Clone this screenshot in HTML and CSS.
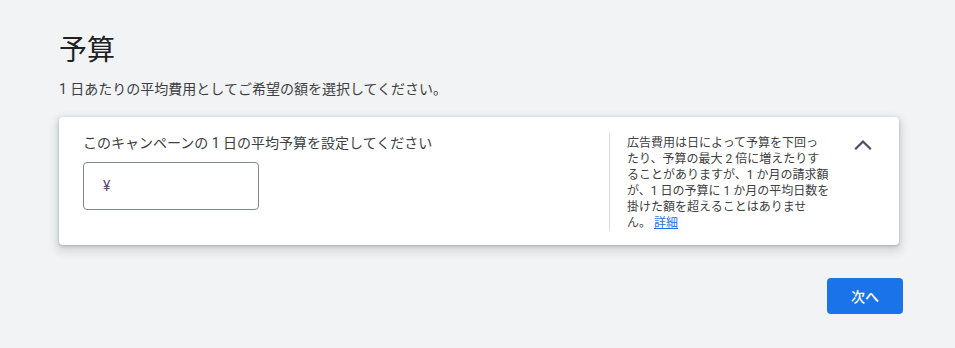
FILE: index.html
```html
<!DOCTYPE html>
<html lang="ja">
<head>
    <meta charset="UTF-8">
    <title>予算</title>
    <link rel="stylesheet" href="styles.css">
</head>
<body>
    <div class="page">
        <h1 class="title">予算</h1>
        <p class="subtitle">1 日あたりの平均費用としてご希望の額を選択してください。</p>

        <div class="card">
            <div class="card-main">
                <label class="field-label" for="budget">このキャンペーンの 1 日の平均予算を設定してください</label>
                <div class="money-input">
                    <span class="currency">¥</span>
                    <input id="budget" type="text" class="money-control">
                </div>
            </div>
            <div class="card-help">
                <span>広告費用は日によって予算を下回ったり、予算の最大 2 倍に増えたりすることがありますが、1 か月の請求額が、1 日の予算に 1 か月の平均日数を掛けた額を超えることはありません。</span>
                <a href="#" class="link">詳細</a>
            </div>
            <button class="collapse-btn" type="button" aria-label="閉じる">
                <svg width="18" height="12" viewBox="0 0 18 12">
                    <path d="M1.2 10.3 L9 2.5 L16.8 10.3" fill="none" stroke="#4a4d6a" stroke-width="2.2"/>
                </svg>
            </button>
        </div>

        <div class="actions">
            <button class="btn-primary" type="button">次へ</button>
        </div>
    </div>
</body>
</html>
```

FILE: styles.css
```css
html, body {
    margin: 0;
    padding: 0;
    background-color: #f1f3f4;
    font-family: Roboto, "Noto Sans CJK JP", sans-serif;
    color: #3c4043;
}

.page {
    width: 840px;
    padding: 33px 0 0 59px;
}

.title {
    margin: 0;
    font-size: 28px;
    line-height: 36px;
    font-weight: 400;
    color: #202124;
}

.subtitle {
    margin: 10px 0 0;
    font-size: 14px;
    line-height: 20px;
}

.card {
    display: flex;
    align-items: flex-start;
    margin-top: 18px;
    padding: 16px 24px 14px;
    background-color: #fff;
    border-radius: 4px;
    box-shadow: 0 1px 3px rgba(60, 64, 67, 0.3), 0 4px 8px 3px rgba(60, 64, 67, 0.15);
}

.card-main {
    flex: 1;
}

.field-label {
    display: block;
    font-size: 14px;
    line-height: 20px;
}

.money-input {
    display: flex;
    align-items: center;
    width: 176px;
    height: 48px;
    margin-top: 9px;
    box-sizing: border-box;
    border: 1px solid #80868b;
    border-radius: 4px;
    padding-left: 19px;
}

.currency {
    font-size: 14px;
    color: #5f4b6e;
}

.money-control {
    flex: 1;
    min-width: 0;
    border: none;
    outline: none;
    background: transparent;
    font-size: 14px;
    padding: 0 8px;
}

.card-help {
    width: 203px;
    padding: 2px 0 0 17px;
    border-left: 1px solid #dadce0;
    font-size: 12px;
    line-height: 16px;
}

.link {
    color: #1a73e8;
}

.collapse-btn {
    display: flex;
    align-items: center;
    justify-content: center;
    width: 24px;
    height: 24px;
    margin-left: 21px;
    padding: 0;
    border: none;
    background: none;
    cursor: pointer;
}

.actions {
    display: flex;
    justify-content: flex-end;
    margin-top: 33px;
    margin-right: -4px;
}

.btn-primary {
    width: 76px;
    height: 36px;
    border: none;
    border-radius: 4px;
    background-color: #1a73e8;
    color: #fff;
    font-family: Roboto, "Noto Sans CJK JP", sans-serif;
    font-size: 14px;
    font-weight: 500;
    cursor: pointer;
}
```
